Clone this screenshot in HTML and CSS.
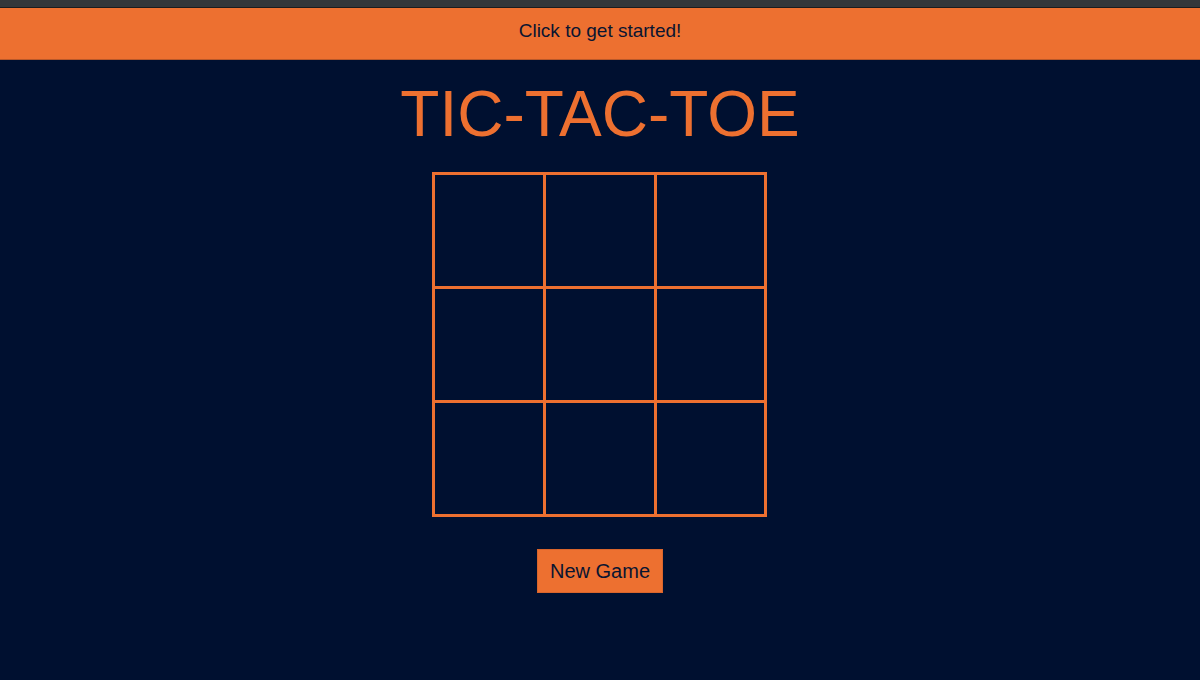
FILE: index.html
```html
<!DOCTYPE html>
<html>
<head>
<meta charset="utf-8">
<title>Tic-Tac-Toe</title>
<link rel="stylesheet" href="styles.css">
</head>
<body>
<div class="chrome"></div>
<header class="banner">Click to get started!</header>
<main class="game">
  <h1 class="title">TIC-TAC-TOE</h1>
  <div class="board">
    <div class="cell"></div><div class="cell"></div><div class="cell"></div>
    <div class="cell"></div><div class="cell"></div><div class="cell"></div>
    <div class="cell"></div><div class="cell"></div><div class="cell"></div>
  </div>
  <button class="new-game">New Game</button>
</main>
</body>
</html>
```
FILE: styles.css
```css
html, body {
  margin: 0;
  padding: 0;
  height: 100%;
}
body {
  background: #001030;
  font-family: "Liberation Sans", Arial, sans-serif;
  color: #001030;
}
.chrome {
  height: 7px;
  background: #33373a;
  border-bottom: 1px solid #1a1c1e;
}
.banner {
  box-sizing: border-box;
  height: 52px;
  padding-top: 12px;
  background: #ed7030;
  border-bottom: 1px solid #b9582a;
  text-align: center;
  font-size: 19px;
  line-height: 22px;
  color: #0a1530;
}
.game {
  display: flex;
  flex-direction: column;
  align-items: center;
}
.title {
  margin: 17px 0 0;
  font-size: 64px;
  font-weight: normal;
  line-height: 74px;
  color: #ed7030;
}
.board {
  margin-top: 21px;
  align-self: flex-start;
  margin-left: calc(50% - 168px);
  display: grid;
  grid-template-columns: 108px 108px 107px;
  grid-template-rows: 111px 111px 111px;
  gap: 3px;
  border: 3px solid #ed7030;
  background: #ed7030;
}
.cell {
  background: #001030;
}
.new-game {
  margin-top: 32px;
  height: 44px;
  padding: 0 12px;
  background: #ed7030;
  border: 1px solid #d8652c;
  border-radius: 0;
  font-family: "Liberation Sans", Arial, sans-serif;
  font-size: 20px;
  color: #0a1530;
}
```
